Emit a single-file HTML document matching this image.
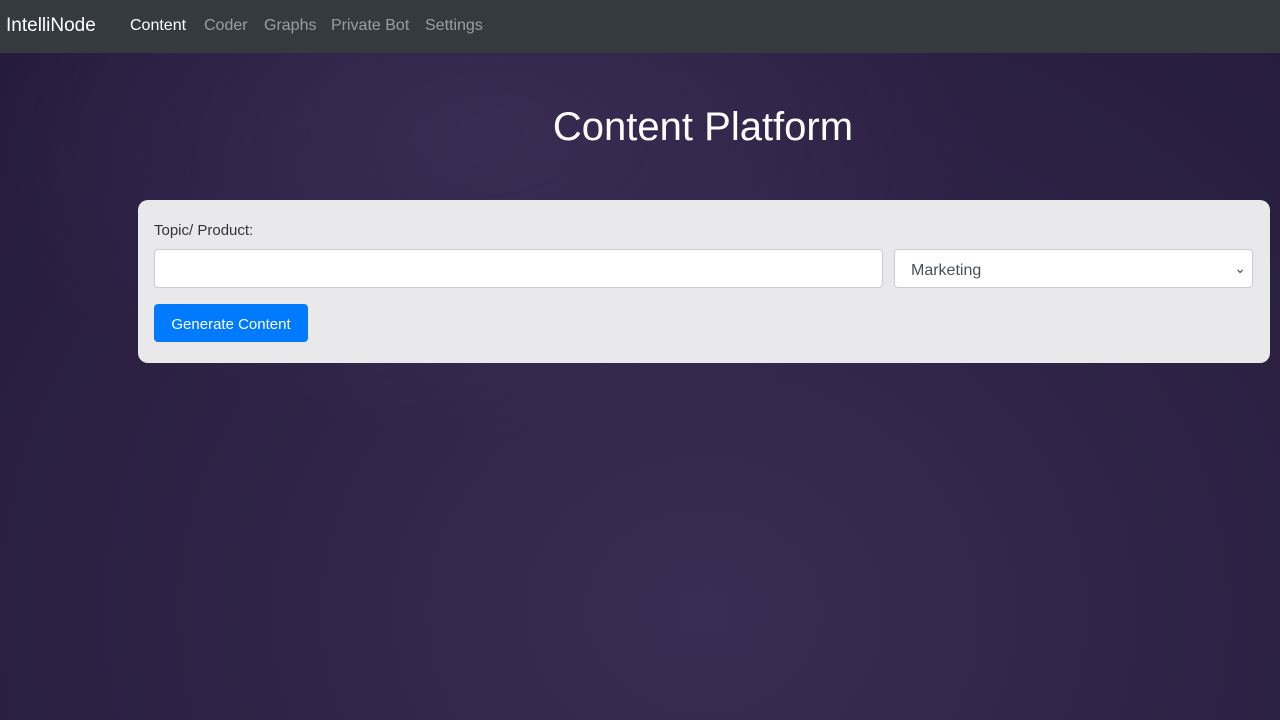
<!DOCTYPE html>
<html><head><style>
body{margin:0;width:1280px;height:720px;overflow:hidden;font-family:"Liberation Sans",sans-serif;background:radial-gradient(ellipse 500px 300px at 480px 130px,rgba(70,55,100,.5),rgba(70,55,100,0)),radial-gradient(ellipse at 55% 85%,#3a2d55 0%,#2f2447 45%,#241a3a 100%);position:relative}
.nav{position:absolute;left:0;top:0;width:1280px;height:53px;background:#343a40}
.nav span{position:absolute;top:17px;font-size:16px;color:rgba(255,255,255,.5)}
.brand{left:6px;font-size:19px!important;top:15px!important;color:#fff!important}
h1{position:absolute;left:0;width:1406px;text-align:center;top:105px;margin:0;font-weight:400;font-size:40px;color:#fff}
.card{position:absolute;left:138px;top:200px;width:1132px;height:163px;background:#e9e9ec;border-radius:10px}
.lbl{position:absolute;left:16px;top:22px;font-size:15px;color:#333}
.in{position:absolute;left:16px;top:49px;width:727px;height:37px;background:#fff;border:1px solid #ccc;border-radius:4px}
.sel{position:absolute;left:756px;top:49px;width:357px;height:37px;background:#fff;border:1px solid #ccc;border-radius:4px;font-size:16px;color:#495057;line-height:41px;text-indent:16px}
.sel:after{content:"⌄";position:absolute;right:6px;top:-2px;font-size:14px;text-indent:0}
.btn{position:absolute;left:16px;top:104px;width:154px;height:38px;background:#007bff;border-radius:4px;color:#fff;font-size:15px;line-height:41px;text-align:center}
</style></head><body>
<div class="nav"><span class="brand">IntelliNode</span><span style="left:130px;color:#fff">Content</span><span style="left:204px">Coder</span><span style="left:264px">Graphs</span><span style="left:331px">Private Bot</span><span style="left:425px">Settings</span></div>
<h1>Content Platform</h1>
<div class="card"><div class="lbl">Topic/ Product:</div><div class="in"></div><div class="sel">Marketing</div><div class="btn">Generate Content</div></div>
</body></html>
